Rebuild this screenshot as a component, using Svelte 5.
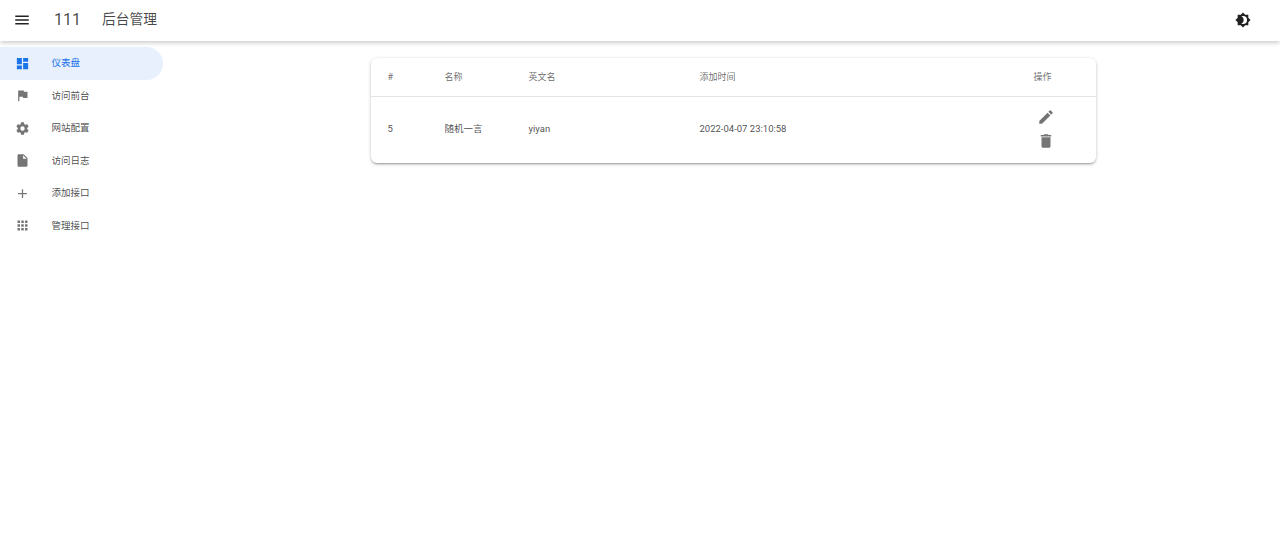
<script>
  const nav = [
    { label: '仪表盘', d: 'M13,3V9H21V3M13,21H21V11H13M3,21H11V15H3M3,13H11V3H3V13Z', active: true },
    { label: '访问前台', d: 'M14.4,6L14,4H5V21H7V14H12.6L13,16H20V6H14.4Z' },
    { label: '网站配置', d: 'M12,15.5A3.5,3.5 0 0,1 8.5,12A3.5,3.5 0 0,1 12,8.5A3.5,3.5 0 0,1 15.5,12A3.5,3.5 0 0,1 12,15.5M19.43,12.97C19.47,12.65 19.5,12.33 19.5,12C19.5,11.67 19.47,11.34 19.43,11L21.54,9.37C21.73,9.22 21.78,8.95 21.66,8.73L19.66,5.27C19.54,5.05 19.27,4.96 19.05,5.05L16.56,6.05C16.04,5.66 15.5,5.32 14.87,5.07L14.5,2.42C14.46,2.18 14.25,2 14,2H10C9.75,2 9.54,2.18 9.5,2.42L9.13,5.07C8.5,5.32 7.96,5.66 7.44,6.05L4.95,5.05C4.73,4.96 4.46,5.05 4.34,5.27L2.34,8.73C2.21,8.95 2.27,9.22 2.46,9.37L4.57,11C4.53,11.34 4.5,11.67 4.5,12C4.5,12.33 4.53,12.65 4.57,12.97L2.46,14.63C2.27,14.78 2.21,15.05 2.34,15.27L4.34,18.73C4.46,18.95 4.73,19.03 4.95,18.95L7.44,17.94C7.96,18.34 8.5,18.68 9.13,18.93L9.5,21.58C9.54,21.82 9.75,22 10,22H14C14.25,22 14.46,21.82 14.5,21.58L14.87,18.93C15.5,18.67 16.04,18.34 16.56,17.94L19.05,18.95C19.27,19.03 19.54,18.95 19.66,18.73L21.66,15.27C21.78,15.05 21.73,14.78 21.54,14.63L19.43,12.97Z' },
    { label: '访问日志', d: 'M13,9V3.5L18.5,9M6,2C4.89,2 4,2.89 4,4V20A2,2 0 0,0 6,22H18A2,2 0 0,0 20,20V8L14,2H6Z' },
    { label: '添加接口', d: 'M19,13H13V19H11V13H5V11H11V5H13V11H19V13Z' },
    { label: '管理接口', d: 'M16,20H20V16H16M16,14H20V10H16M10,8H14V4H10M16,8H20V4H16M10,14H14V10H10M4,14H8V10H4M4,20H8V16H4M10,20H14V16H10M4,8H8V4H4V8Z' }
  ];
  const menu = 'M3,6H21V8H3V6M3,11H21V13H3V11M3,16H21V18H3V16Z';
  const theme = 'M12,18C11.11,18 10.26,17.8 9.5,17.45C11.56,16.5 13,14.42 13,12C13,9.58 11.56,7.5 9.5,6.55C10.26,6.2 11.11,6 12,6A6,6 0 0,1 18,12A6,6 0 0,1 12,18M20,8.69V4H15.31L12,0.69L8.69,4H4V8.69L0.69,12L4,15.31V20H8.69L12,23.31L15.31,20H20V15.31L23.31,12L20,8.69Z';
  const pencil = 'M20.71,7.04C21.1,6.65 21.1,6 20.71,5.63L18.37,3.29C18,2.9 17.35,2.9 16.96,3.29L15.12,5.12L18.87,8.87M3,17.25V21H6.75L17.81,9.93L14.06,6.18L3,17.25Z';
  const trash = 'M19,4H15.5L14.5,3H9.5L8.5,4H5V6H19M6,19A2,2 0 0,0 8,21H16A2,2 0 0,0 18,19V7H6V19Z';
</script>

<div class="page">
  <header class="bar">
    <svg class="icon dark menu" viewBox="0 0 24 24"><path d={menu} /></svg>
    <span class="brand">111</span>
    <span class="title">后台管理</span>
    <svg class="icon dark theme" viewBox="0 0 24 24"><path d={theme} /></svg>
  </header>

  <div class="body">
    <nav class="side">
      {#each nav as item}
        <a class="item" class:active={item.active} href="#top">
          <svg class="icon" viewBox="0 0 24 24"><path d={item.d} /></svg>
          <span>{item.label}</span>
        </a>
      {/each}
    </nav>

    <main class="main">
      <div class="card">
        <table>
          <thead>
            <tr>
              <th class="c1">#</th>
              <th class="c2">名称</th>
              <th class="c3">英文名</th>
              <th class="c4">添加时间</th>
              <th>操作</th>
            </tr>
          </thead>
          <tbody>
            <tr>
              <td class="text">5</td>
              <td class="text">随机一言</td>
              <td class="text">yiyan</td>
              <td class="text">2022-04-07 23:10:58</td>
              <td class="text">
                <div class="actions">
                  <svg class="icon" viewBox="0 0 24 24"><path d={pencil} /></svg>
                  <svg class="icon" viewBox="0 0 24 24"><path d={trash} /></svg>
                </div>
              </td>
            </tr>
          </tbody>
        </table>
      </div>
    </main>
  </div>
</div>

<style>
  :global(body) {
    margin: 0;
    background: #fff;
  }
  .page {
    height: 556px;
    overflow: hidden;
    display: flex;
    flex-direction: column;
    font-family: Roboto, "Noto Sans CJK SC", sans-serif;
    color: rgba(0, 0, 0, 0.87);
  }
  .icon {
    width: 18px;
    height: 18px;
    flex: none;
    display: block;
    fill: rgba(0, 0, 0, 0.54);
  }
  .icon.dark {
    fill: rgba(0, 0, 0, 0.87);
  }
  .bar {
    height: 41px;
    flex: none;
    box-sizing: border-box;
    display: flex;
    align-items: center;
    line-height: 1;
    padding: 0 29px 2px 13px;
    background: #fff;
    box-shadow: 0 2px 4px -1px rgba(0, 0, 0, 0.1), 0 3px 4px 0 rgba(0, 0, 0, 0.07), 0 1px 6px 0 rgba(0, 0, 0, 0.06);
    position: relative;
    z-index: 2;
  }
  .bar .menu {
    margin-top: 1px;
  }
  .brand {
    margin-left: 23px;
    font-size: 16px;
    width: 48px;
    color: rgba(0, 0, 0, 0.72);
  }
  .title {
    font-size: 13.75px;
    color: rgba(0, 0, 0, 0.72);
  }
  .bar .theme {
    margin-left: auto;
    width: 16px;
    height: 16px;
  }
  .body {
    flex: 1;
    display: flex;
    min-height: 0;
  }
  .side {
    width: 187px;
    flex: none;
    padding-top: 6px;
    box-sizing: border-box;
  }
  .item {
    height: 32.5px;
    margin-right: 24px;
    padding-left: 14.5px;
    display: flex;
    align-items: center;
    gap: 22px;
    font-size: 9.5px;
    line-height: 1;
    color: rgba(0, 0, 0, 0.72);
    text-decoration: none;
    border-radius: 0 16.25px 16.25px 0;
  }
  .item span {
    margin-bottom: 1px;
  }
  .item .icon {
    width: 15px;
    height: 15px;
  }
  .item.active {
    background: #e8f0fe;
    color: #1a73e8;
  }
  .item.active .icon {
    fill: #1a73e8;
  }
  .main {
    flex: 1;
    min-width: 0;
    padding-top: 17px;
  }
  .card {
    width: 725px;
    margin: 0 auto;
    background: #fff;
    border-radius: 6px;
    overflow: hidden;
    box-shadow: 0 2px 2px -1px rgba(0, 0, 0, 0.25), 0 1px 3px 0 rgba(0, 0, 0, 0.14), 0 1px 4px 0 rgba(0, 0, 0, 0.1);
  }
  table {
    width: 100%;
    table-layout: fixed;
    border-collapse: separate;
    border-spacing: 0;
  }
  th,
  td {
    padding: 0 0 0 16.5px;
    text-align: left;
    box-sizing: border-box;
    line-height: 1;
  }
  th {
    height: 39px;
    font-size: 9px;
    font-weight: 400;
    color: rgba(0, 0, 0, 0.6);
    border-bottom: 1px solid #e4e4e4;
  }
  td {
    height: 66px;
    font-size: 9.5px;
    color: rgba(0, 0, 0, 0.72);
  }
  td.text {
    padding-bottom: 2px;
  }
  .c1 { width: 57px; }
  .c2 { width: 84px; }
  .c3 { width: 171px; }
  .c4 { width: 334px; }
  .actions {
    display: flex;
    flex-direction: column;
    gap: 6px;
    width: 18px;
    margin-left: 3.5px;
  }
</style>
